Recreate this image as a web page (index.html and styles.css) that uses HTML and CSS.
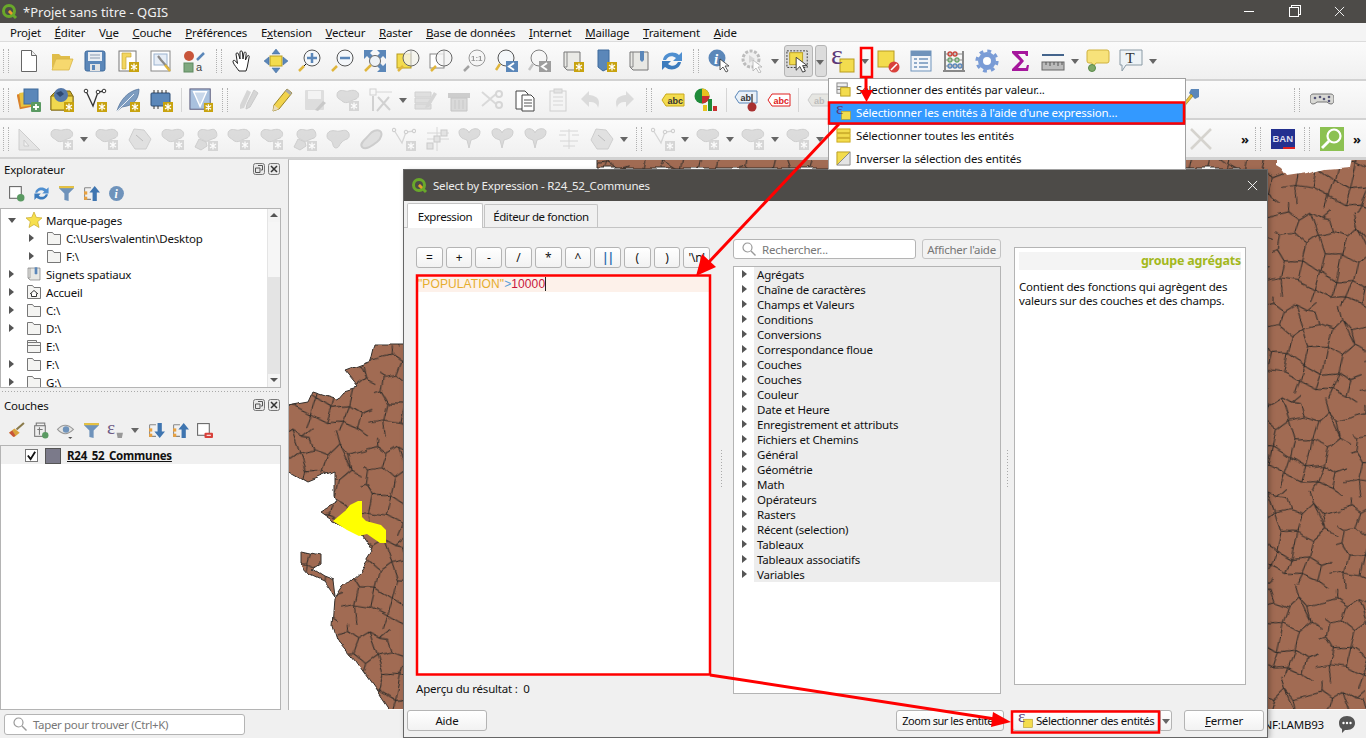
FILE: index.html
```html
<!DOCTYPE html>
<html lang="fr">
<head>
    <meta charset="UTF-8">
    <title>*Projet sans titre - QGIS</title>
    <link rel="stylesheet" href="styles.css">
</head>
<body>
    <!-- Icon sprite -->
    <svg class="sprite" xmlns="http://www.w3.org/2000/svg">
        <defs>
            <pattern id="cells" width="150" height="130" patternUnits="userSpaceOnUse" patternTransform="scale(.72) rotate(9)">
                <rect x="-5" y="-5" width="160" height="140" fill="#a16b53"/>
                <path d="M0 18L14 12 30 20 44 8 60 14 72 0M30 20L26 40 8 46 0 42M26 40L46 52 60 38 44 8M60 38L80 30 72 14 60 14M80 30L100 34 112 18 104 0M100 34L96 58 72 62 60 38M46 52L44 76 20 80 8 66 8 46M72 62L70 88 44 76M96 58L120 66 134 50 112 18M134 50L150 56M120 66L118 92 94 98 70 88M94 98L96 58M8 66L0 70M20 80L18 104 0 110M44 76L42 104 18 104M70 88L66 112 42 104M94 98L90 120 66 112M118 92L136 100 150 92M136 100L134 122 112 116 90 120M112 116L118 92M18 104L24 130M66 112L62 130M112 116L108 130M134 122L150 130M134 50L126 30 150 20M112 18L126 30M14 12L12 0M24 130L18 104M104 0L112 18" fill="none" stroke="#35302c" stroke-width="1.500"/>
            </pattern>
            <filter id="wobble" filterUnits="userSpaceOnUse" x="288" y="160" width="1078" height="550" color-interpolation-filters="sRGB">
                <feTurbulence type="fractalNoise" baseFrequency=".06" numOctaves="1" seed="4"/>
                <feDisplacementMap in="SourceGraphic" scale="8" xChannelSelector="R" yChannelSelector="G"/>
            </filter>
        </defs>
        <symbol id="b-gold" viewBox="0 0 10 10"><rect width="10" height="10" fill="#c8a30f"/><path d="M5 1.500v7M2 3l6 4M8 3L2 7" stroke="#fff" stroke-width="1.300"/></symbol>
        <symbol id="b-plus" viewBox="0 0 10 10"><rect width="10" height="10" rx="1" fill="#5a9a62"/><path d="M5 2v6M2 5h6" stroke="#fff" stroke-width="1.800"/></symbol>
        <symbol id="b-grey" viewBox="0 0 10 10"><rect width="10" height="10" fill="#cfccc4"/><path d="M5 1.500v7M2 3l6 4M8 3L2 7" stroke="#fff" stroke-width="1.300"/></symbol>
        <symbol id="i-new" viewBox="0 0 24 24"><path d="M4.500 1.500h10l5 5v16h-15z" fill="#fff" stroke="#666"/><path d="M14.500 1.500v5h5" fill="#eee" stroke="#666"/></symbol>
        <symbol id="i-open" viewBox="0 0 24 24"><path d="M2 5h7l2 2h9v4H6l-4 9z" fill="#e0bd4a"/><path d="M6 10h17l-4 11H2z" fill="#f6d86e" stroke="#d8b548" stroke-width=".8"/></symbol>
        <symbol id="i-save" viewBox="0 0 24 24"><rect x="2" y="2" width="20" height="20" rx="2" fill="#5b87b9" stroke="#3f6b9c"/><rect x="5" y="3" width="14" height="9" fill="#e9eef4"/><path d="M7 6h10M7 9h10" stroke="#8a9bb0"/><rect x="7" y="15" width="10" height="7" fill="#e4e4e4"/><rect x="9" y="16" width="3" height="5" fill="#5b87b9"/></symbol>
        <symbol id="i-layout" viewBox="0 0 24 24"><rect x="3" y="2" width="17" height="20" fill="#fff" stroke="#777"/><path d="M6 4h9v4h-5v12H6z" fill="#f3d65f" stroke="#c6a63a" stroke-width=".7"/><use href="#b-gold" x="13" y="13" width="10" height="10"/></symbol>
        <symbol id="i-wrench" viewBox="0 0 24 24"><rect x="2" y="2" width="19" height="20" fill="#fff" stroke="#888"/><rect x="5" y="5" width="13" height="11" fill="#e6edf6" stroke="#9cb3d0"/><path d="M9 7l3 4 8 9" stroke="#8a8a8a" stroke-width="2.200" fill="none"/><path d="M16 16l5 6" stroke="#e0b63c" stroke-width="2.500"/></symbol>
        <symbol id="i-style" viewBox="0 0 24 24"><circle cx="7" cy="7" r="5" fill="#c8553a"/><path d="M15 11l7-7" stroke="#5b87b9" stroke-width="2.500"/><rect x="2" y="14" width="9" height="9" fill="#7fa87f" stroke="#5f8a60"/></symbol>
        <symbol id="i-hand" viewBox="0 0 24 24"><path d="M8 22c-2-3-5-6-6-9-.5-2 1.500-2 2.500-1l2 2.500L5 5c0-1.500 2-1.500 2.500 0L9 10l0-7c0-1.500 2.200-1.500 2.400 0l.6 7 1-6c.3-1.400 2.300-1 2.200.5L14.500 11l1.800-4c.7-1.200 2.200-.5 1.900.8L17 14c-.3 3-1 5-2 8z" fill="#fff" stroke="#222"/></symbol>
        <symbol id="i-pansel" viewBox="0 0 24 24"><rect x="6" y="7" width="12" height="10" fill="#f3dc4e" stroke="#b89c1f"/><path d="M12 0l4 5H8zM12 24l-4-5h8zM0 12l5-4v8zM24 12l-5 4V8z" fill="#5b87b9" stroke="#3f6b9c" stroke-width=".5"/></symbol>
        <symbol id="i-zin" viewBox="0 0 24 24"><circle cx="15" cy="9" r="8" fill="#f4f7fa" stroke="#555"/><path d="M10 9h10M15 4v10" stroke="#5b87b9" stroke-width="2.500"/><path d="M9 15l-7 7" stroke="#111" stroke-width="1"/><path d="M7 17l-5 5" stroke="#e0b63c" stroke-width="2.500"/></symbol>
        <symbol id="i-zout" viewBox="0 0 24 24"><circle cx="15" cy="9" r="8" fill="#f4f7fa" stroke="#555"/><path d="M10 9h10" stroke="#5b87b9" stroke-width="2.500"/><path d="M7 17l-5 5" stroke="#e0b63c" stroke-width="2.500"/></symbol>
        <symbol id="i-zfull" viewBox="0 0 24 24"><path d="M1 1h9L7 4l3 3-3 3-3-3-3 3zM23 1v9l-3-3-3 3-3-3 3-3-3-3zM23 23h-9l3-3-3-3 3-3 3 3 3-3z" fill="#5b87b9"/><circle cx="12" cy="12" r="5.500" fill="#eef2f6" stroke="#666"/><path d="M8 16l-6 6" stroke="#e0b63c" stroke-width="2.500"/></symbol>
        <symbol id="i-zlayer" viewBox="0 0 24 24"><rect x="1" y="5" width="14" height="14" fill="#f3dc4e" stroke="#b89c1f"/><circle cx="15" cy="9" r="8" fill="#f4f4ec" fill-opacity=".8" stroke="#666"/><path d="M15 2v14" stroke="#bbb"/><path d="M7 17l-5 5" stroke="#e0b63c" stroke-width="2.500"/></symbol>
        <symbol id="i-zsel" viewBox="0 0 24 24"><rect x="1" y="5" width="14" height="14" fill="#fff" stroke="#888"/><circle cx="15" cy="9" r="8" fill="#f4f4f4" fill-opacity=".8" stroke="#666"/><path d="M15 2v14" stroke="#bbb"/><path d="M7 17l-5 5" stroke="#e0b63c" stroke-width="2.500"/></symbol>
        <symbol id="i-z11" viewBox="0 0 24 24"><circle cx="15" cy="9" r="8" fill="#f6f6f6" stroke="#777"/><path d="M7 17l-5 5" stroke="#888" stroke-width="2.500"/></symbol>
        <symbol id="i-zlast" viewBox="0 0 24 24"><circle cx="11" cy="9" r="8" fill="#f4f7fa" stroke="#555"/><path d="M5 15l-4 6" stroke="#e0b63c" stroke-width="2.500"/><rect x="11" y="12" width="12" height="11" fill="#5b87b9"/><path d="M19 14l-5 3.500 5 3.500" stroke="#fff" stroke-width="2" fill="none"/></symbol>
        <symbol id="i-map" viewBox="0 0 24 24"><path d="M3 3h16v18H6l-3-3z" fill="#eaeae6" stroke="#777"/><path d="M6 3v15H3" fill="none" stroke="#888"/><use href="#b-gold" x="13" y="13" width="10" height="10"/></symbol>
        <symbol id="i-flag" viewBox="0 0 24 24"><path d="M4 1h11v18l-6 3-5-4z" fill="#5b87b9" stroke="#3f6b9c"/><use href="#b-gold" x="13" y="13" width="10" height="10"/></symbol>
        <symbol id="i-book" viewBox="0 0 24 24"><path d="M3 3h18v18H6l-3-3z" fill="#e8e8e4" stroke="#777"/><path d="M6 3v15H3" fill="none" stroke="#888"/><path d="M13 2h4v9l-2 2-2-2z" fill="#5b87b9"/></symbol>
        <symbol id="i-refresh" viewBox="0 0 24 24"><path d="M3 11C4 4 13 1 19 6l3-3v9h-9l3-3c-4-3-8-2-10 2z" fill="#4f8fd0"/><path d="M21 13c-1 7-10 10-16 5l-3 3v-9h9l-3 3c4 3 8 2 10-2z" fill="#3b7bbd"/></symbol>
        <symbol id="i-ident" viewBox="0 0 24 24"><circle cx="9" cy="9" r="8.500" fill="#5b87b9"/><path d="M12 10l0 11 3-3 3 5 2-1-3-5h4z" fill="#fff" stroke="#333" stroke-width=".8"/></symbol>
        <symbol id="i-action" viewBox="0 0 24 24"><circle cx="10" cy="10" r="8" fill="#eee" stroke="#aaa" stroke-width="3" stroke-dasharray="3 1.500"/><path d="M8 6l6 4-6 4z" fill="#ccc"/><path d="M12 11v11l3-3 3 5 2-1-3-5h4z" fill="#fff" stroke="#999" stroke-width=".8"/></symbol>
        <symbol id="i-select" viewBox="0 0 26 26"><rect x="1" y="2" width="22" height="18" fill="none" stroke="#333" stroke-dasharray="2 1.500"/><rect x="4" y="4" width="14" height="13" fill="#f3dc4e" stroke="#b89c1f"/><path d="M11 9v14l4-4 3 6 3-1-3-6h5z" fill="#fff" stroke="#333"/></symbol>
        <symbol id="i-eps" viewBox="0 0 24 24"><rect x="9" y="10" width="14" height="13" fill="#f3dc4e" stroke="#b89c1f"/></symbol>
        <symbol id="i-desel" viewBox="0 0 24 24"><rect x="2" y="2" width="16" height="16" fill="#f3dc4e" stroke="#b89c1f"/><circle cx="18" cy="18" r="5.500" fill="#d9413b"/><path d="M15 21l6-6" stroke="#fff" stroke-width="1.600"/></symbol>
        <symbol id="i-table" viewBox="0 0 24 24"><rect x="2" y="2" width="20" height="20" fill="#f2f5f9" stroke="#6f93bb"/><rect x="2" y="2" width="20" height="5" fill="#6f93bb"/><path d="M5 10h3M10 10h9M5 14h3M10 14h9M5 18h3M10 18h9" stroke="#6f93bb" stroke-width="1.500"/></symbol>
        <symbol id="i-abacus" viewBox="0 0 24 24"><path d="M3 2v19M21 2v19M1 22h22" stroke="#666" stroke-width="1.500"/><path d="M3 5h18M3 11h18M3 17h18" stroke="#888"/><g fill="none" stroke-width="1.300"><circle cx="8" cy="5" r="2" stroke="#c8453a"/><circle cx="13" cy="5" r="2" stroke="#c8453a"/><circle cx="8" cy="11" r="2" stroke="#6aa36a"/><circle cx="15" cy="11" r="2" stroke="#6aa36a"/><circle cx="8" cy="17" r="2" stroke="#5b87b9"/><circle cx="13" cy="17" r="2" stroke="#5b87b9"/><circle cx="18" cy="17" r="2" stroke="#5b87b9"/></g></symbol>
        <symbol id="i-gear" viewBox="0 0 24 24"><circle cx="12" cy="12" r="6.500" fill="none" stroke="#7a9cd6" stroke-width="5"/><circle cx="12" cy="12" r="10" fill="none" stroke="#7a9cd6" stroke-width="3.200" stroke-dasharray="3.850 4"/><circle cx="12" cy="12" r="3.500" fill="#fff"/></symbol>
        <symbol id="i-sigma" viewBox="0 0 24 24"><path d="M4 2h16v5h-2l-1-2H10l6 7-6 7h8l1-3h2l-1 6H4v-2l8-8-8-8z" fill="#a5179c"/></symbol>
        <symbol id="i-ruler" viewBox="0 0 24 24"><path d="M1 6h22" stroke="#44648c" stroke-width="2"/><rect x="1" y="13" width="22" height="8" fill="#bbb" stroke="#666"/><path d="M5 13v3M9 13v4M13 13v3M17 13v4M21 13v3" stroke="#555"/></symbol>
        <symbol id="i-balloon" viewBox="0 0 24 24"><path d="M3 1h18q2 0 2 2v9q0 2-2 2H10l-3 4-1-4H3q-2 0-2-2V3q0-2 2-2z" fill="#f7e27a" stroke="#cfb23e"/><circle cx="6" cy="19" r="3.500" fill="#7fa86a" stroke="#5a8a4a"/></symbol>
        <symbol id="i-textbox" viewBox="0 0 24 24"><path d="M1 1h22v15H7l-4 6v-6H1z" fill="#eef3f6" stroke="#8a9aa5"/></symbol>
        <symbol id="i-dsm" viewBox="0 0 24 24"><rect x="1" y="5" width="15" height="15" fill="#d9822b" transform="rotate(-12 8 12)"/><rect x="3" y="4" width="14" height="14" fill="#e9c33f" transform="rotate(-8 10 11)"/><rect x="7" y="1" width="14" height="15" fill="#5b87b9" stroke="#3f6b9c"/><use href="#b-plus" x="14" y="14" width="10" height="10"/></symbol>
        <symbol id="i-gpkg" viewBox="0 0 24 24"><path d="M1 8l5-5h14l3 5v14H1z" fill="#c9a826" stroke="#7a6510"/><path d="M1 8h22v14H1z" fill="#f0d84e" stroke="#8a7315"/><circle cx="11" cy="7" r="7" fill="#5578a8"/><path d="M6 5l5-2 3 3-4 3z" fill="#2e4870"/><use href="#b-gold" x="14" y="14" width="10" height="10"/></symbol>
        <symbol id="i-vee" viewBox="0 0 24 24"><path d="M3 3l7 15 5-14 6-1" fill="none" stroke="#333" stroke-width="1.300"/><g fill="#fff" stroke="#333"><circle cx="3" cy="3" r="1.800"/><circle cx="15" cy="4" r="1.800"/><circle cx="21" cy="3" r="1.800"/></g><use href="#b-gold" x="14" y="14" width="10" height="10"/></symbol>
        <symbol id="i-feather" viewBox="0 0 24 24"><path d="M1 23C4 12 12 3 23 1c0 7-3 15-12 17l-5 1z" fill="#7d9cc0" stroke="#4f6f97" stroke-width=".7"/><path d="M1 23L18 6" stroke="#e8eef5"/><use href="#b-gold" x="14" y="14" width="10" height="10"/></symbol>
        <symbol id="i-chip" viewBox="0 0 24 24"><rect x="2" y="5" width="19" height="13" rx="1" fill="#5b87b9" stroke="#2d4d75"/><path d="M5 2v3M9 2v3M13 2v3M17 2v3M5 18v3M9 18v3" stroke="#333"/><use href="#b-gold" x="14" y="14" width="10" height="10"/></symbol>
        <symbol id="i-mesh" viewBox="0 0 26 26"><rect x="1" y="1" width="22" height="22" fill="#a9c1de" stroke="#557"/><path d="M5 4l7 16 7-16z" fill="#c9d8ea" stroke="#fff" stroke-width="1.500"/><use href="#b-gold" x="16" y="16" width="10" height="10"/></symbol>
        <symbol id="i-pencil" viewBox="0 0 24 24"><path d="M17 1l5 4L9 21l-6 2 1-6z" fill="#f1d34c" stroke="#9a8325"/><path d="M4 17l5 4-6 2z" fill="#eadbb8"/><path d="M17 1l5 4-2 2-5-4z" fill="#aaa"/></symbol>
        <symbol id="i-pin" viewBox="0 0 24 24"><path d="M14 1h8v8l-4 2-6-6z" fill="#5b87b9"/><path d="M16 8L6 20l-3 3 1-4L14 6z" fill="#e9c33f" stroke="#8a7315" stroke-width=".6"/></symbol>
        <symbol id="i-pencils" viewBox="0 0 24 24"><path d="M10 2l4 2-7 16-4 1 0-4z" fill="#ccc"/><path d="M17 2l4 3-8 14-4 2 1-5z" fill="#ccc" stroke="#bbb"/></symbol>
        <symbol id="i-saveed" viewBox="0 0 24 24"><rect x="2" y="2" width="19" height="20" rx="1" fill="#d6d6d2"/><rect x="5" y="3" width="13" height="8" fill="#f2f2f0"/><path d="M12 22l8-9 3 2-8 8z" fill="#bbb"/></symbol>
        <symbol id="i-blob" viewBox="0 0 24 24"><path d="M1 7c0-5 5-5 8-4s7-2 11 0 3 7 0 8-5 2-7 3-5 1-7-1-5-2-5-6z" fill="#d5d3ce" stroke="#c2c0ba"/><use href="#b-grey" x="13" y="13" width="10" height="10"/></symbol>
        <symbol id="i-blobbare" viewBox="0 0 24 24"><path d="M1 9c0-5 5-6 9-5s8-2 11 0 3 7 0 8-4 2-6 4-2 5-5 5-3-4-4-6-5-2-5-6z" fill="#d5d3ce" stroke="#c2c0ba"/></symbol>
        <symbol id="i-blobs" viewBox="0 0 24 24"><path d="M4 7c0-5 5-5 8-4s7-2 9 0 3 7 0 8-5 2-7 3-3 0-5-1-5-2-5-6z" fill="#d5d3ce" stroke="#c2c0ba"/><path d="M1 20l4-8 7 3 1 4-6 4z" fill="#d5d3ce" stroke="#c2c0ba"/><use href="#b-grey" x="14" y="14" width="10" height="10"/></symbol>
        <symbol id="i-hex" viewBox="0 0 24 24"><path d="M6 2l10 1 7 9-5 10H7L1 13z" fill="#dcdad5" stroke="#c2c0ba"/><path d="M8 8l7 6" stroke="#aaa"/></symbol>
        <symbol id="i-tri" viewBox="0 0 24 24"><path d="M2 2l21 21H2z" fill="#e2e0db" stroke="#c2c0ba"/><path d="M7 13l5 6H7z" fill="#f2f2f0" stroke="#c2c0ba"/></symbol>
        <symbol id="i-oval" viewBox="0 0 24 24"><path d="M3 20c-3-4 4-8 7-12s8-6 11-4 1 8-3 11-11 9-15 5z" fill="#dad8d3" stroke="#c2c0ba" stroke-width="2"/></symbol>
        <symbol id="i-node" viewBox="0 0 24 24"><path d="M2 3l8 13 4-11 8-1" fill="none" stroke="#ccc" stroke-width="1.300"/><g fill="#f2f2f0" stroke="#bbb"><circle cx="2" cy="3" r="1.800"/><circle cx="14" cy="5" r="1.800"/><circle cx="22" cy="4" r="1.800"/></g><use href="#b-grey" x="14" y="14" width="10" height="10"/></symbol>
        <symbol id="i-grid" viewBox="0 0 24 24"><path d="M12 0v24M2 12h22M2 6h22" stroke="#ccc"/><g fill="#ddd" stroke="#bbb"><rect x="9" y="9" width="6" height="6"/><rect x="16" y="3" width="6" height="6"/><rect x="2" y="16" width="6" height="6"/></g></symbol>
        <symbol id="i-scis" viewBox="0 0 24 24"><path d="M1 5c0-5 9-4 10 1 1-5 11-6 11-1 0 6-6 7-9 8l-2 8-2-8c-3-1-8-2-8-8z" fill="#d5d3ce" stroke="#c2c0ba"/></symbol>
        <symbol id="i-merge" viewBox="0 0 24 24"><path d="M3 4h18M2 8h7M15 8h7M12 2v20M3 14h18M6 19h12" stroke="#ccc"/></symbol>
        <symbol id="i-scissors" viewBox="0 0 24 24"><path d="M2 4l14 12M2 18L16 6" stroke="#d0d0cc" stroke-width="2"/><circle cx="19" cy="6" r="3" fill="none" stroke="#ccc" stroke-width="2"/><circle cx="19" cy="17" r="3" fill="none" stroke="#ccc" stroke-width="2"/></symbol>
        <symbol id="i-copy" viewBox="0 0 24 24"><path d="M3 3h9l3 3v15H3z" fill="#fff" stroke="#444"/><path d="M9 7h9l3 3v13H9z" fill="#fff" stroke="#444"/><path d="M11 12h8M11 15h8M11 18h8" stroke="#555"/></symbol>
        <symbol id="i-paste" viewBox="0 0 24 24"><rect x="4" y="3" width="16" height="20" fill="#f4f4f2" stroke="#c4c4c0"/><rect x="8" y="1" width="8" height="4" fill="#ddd" stroke="#c4c4c0"/><path d="M7 9h10M7 13h10M7 17h10" stroke="#ccc"/></symbol>
        <symbol id="i-undo" viewBox="0 0 24 24"><path d="M10 3L2 11l8 8v-5c5 0 8 1 9 6 3-9-1-12-9-13z" fill="#d5d3ce"/></symbol>
        <symbol id="i-redo" viewBox="0 0 24 24"><path d="M14 3l8 8-8 8v-5c-5 0-8 1-9 6-3-9 1-12 9-13z" fill="#d5d3ce"/></symbol>
        <symbol id="i-trash" viewBox="0 0 24 24"><path d="M1 5h22v5H1z" fill="#c9bdb8"/><path d="M4 10h16v13H4z" fill="#d8cfcc" stroke="#c2b4ae"/><path d="M8 12v9M12 12v9M16 12v9" stroke="#bbb"/></symbol>
        <symbol id="i-attr" viewBox="0 0 24 24"><path d="M1 4h16v5H1zM1 10h16v5H1zM1 16h16v5H1z" fill="#d8d8d4" stroke="#c4c4c0"/><path d="M12 17l8-13 3 2-8 13-4 1z" fill="#ccc"/></symbol>
        <symbol id="i-fx" viewBox="0 0 24 24"><rect x="1" y="1" width="6" height="6" fill="none" stroke="#c4c4c0"/><path d="M7 4h16" stroke="#ccc"/><path d="M8 23L20 9M9 9l12 13M4 8v15" stroke="#c6c6c2" stroke-width="2"/></symbol>
        <symbol id="i-labelbag" viewBox="0 0 24 14"><path d="M5 1h18v12H5l-4-6z" fill="#f3dc4e" stroke="#c9a81a"/></symbol>
        <symbol id="i-labelred" viewBox="0 0 24 14"><path d="M5 1h18v12H5l-4-6z" fill="#fff" stroke="#e02020"/></symbol>
        <symbol id="i-labelblue" viewBox="0 0 24 24"><path d="M5 3h18v12H5l-4-6z" fill="#e8f0f8" stroke="#5b87b9"/></symbol>
        <symbol id="i-labelgrey" viewBox="0 0 24 14"><path d="M5 1h18v12H5l-4-6z" fill="#e6e6e2" stroke="#ccc"/></symbol>
        <symbol id="i-diagram" viewBox="0 0 24 24"><circle cx="8" cy="8" r="7.500" fill="#1f8a3a"/><path d="M8 8V.500A7.500 7.500 0 0 1 15.500 8z" fill="#e8c21e"/><path d="M8 8h7.500A7.500 7.500 0 0 1 8 15.500z" fill="#c83030"/><rect x="9" y="17" width="4" height="6" fill="#e8c21e"/><rect x="14" y="11" width="4" height="12" fill="#1f8a3a"/><rect x="19" y="18" width="4" height="5" fill="#c83030"/></symbol>
        <symbol id="i-pad" viewBox="0 0 24 24"><path d="M3 6h18q3 0 3 5t-3 5q-2 0-4-2H7q-2 2-4 2-3 0-3-5t3-5z" fill="#d8d8d4" stroke="#777"/><g fill="#557"><circle cx="5" cy="10" r="1.300"/><circle cx="10" cy="9" r="1.300"/><circle cx="14" cy="11" r="1.300"/><circle cx="19" cy="9" r="1.300"/><circle cx="19" cy="13" r="1.300"/></g></symbol>
        <symbol id="i-close-x" viewBox="0 0 24 24"><path d="M2 2l20 20M22 2L2 22" stroke="#d5d3ce" stroke-width="2.500"/></symbol>
        <symbol id="i-ban" viewBox="0 0 24 24"><rect y="2" width="24" height="18" fill="#23308f"/><rect y="20" width="12" height="2" fill="#23308f"/><rect x="12" y="20" width="12" height="2" fill="#d22"/></symbol>
        <symbol id="i-lens" viewBox="0 0 24 24"><rect width="24" height="24" fill="#8cc152"/><circle cx="14" cy="9" r="6.500" fill="none" stroke="#fff" stroke-width="2.200"/><path d="M9 14l-7 7" stroke="#fff" stroke-width="2.800"/></symbol>
        <symbol id="i-search" viewBox="0 0 14 14"><circle cx="5.500" cy="5.500" r="4.500" fill="none" stroke="#999" stroke-width="1.200"/><path d="M9 9l4.500 4.500" stroke="#999" stroke-width="1.400"/></symbol>
        <symbol id="i-folder" viewBox="0 0 16 16"><path d="M1.500 2.500h5l1.500 2h6.500v10h-13z" fill="#f4f4f2" stroke="#777"/></symbol>
        <symbol id="i-drive" viewBox="0 0 16 16"><path d="M1.500 2.500h9v2h4v10h-13z" fill="#f4f4f2" stroke="#777"/><path d="M1.500 4.500h9M1.500 7.500h13" stroke="#777"/></symbol>
        <symbol id="i-home" viewBox="0 0 16 16"><path d="M1.500 1.500h5l1.500 2h6.500v11h-13z" fill="#f4f4f2" stroke="#777"/><path d="M4 10l4-3.500 4 3.500M5.500 9.500v3h5v-3" fill="#fff" stroke="#333"/></symbol>
        <symbol id="i-star" viewBox="0 0 16 16"><path d="M8 0l2.300 5.400 5.700.5-4.300 3.800 1.300 5.800L8 12.500 3 15.500l1.300-5.800L0 5.900l5.700-.5z" fill="#f7e04e" stroke="#c7a92a" stroke-width=".7"/></symbol>
        <symbol id="i-funnel" viewBox="0 0 16 16"><path d="M1 1h14v2L10 8v7l-4-1V8L1 3z" fill="#6f93bb"/><path d="M1 1h14v2H1z" fill="#e9c33f"/></symbol>
        <symbol id="i-info" viewBox="0 0 16 16"><circle cx="8" cy="8" r="7" fill="#6f93bb"/></symbol>
        <symbol id="i-addgrp" viewBox="0 0 16 16"><rect x="1.500" y="1.500" width="11" height="11" fill="#fff" stroke="#666"/><circle cx="12" cy="12" r="3.500" fill="#5a9a62"/></symbol>
        <symbol id="i-collapse" viewBox="0 0 16 16"><path d="M1.500 2.500h6M1.500 2.500v11h6" fill="none" stroke="#888"/><rect x="1" y="6" width="3" height="3" fill="#e9a13f"/><rect x="1" y="11" width="3" height="3" fill="#e9a13f"/><path d="M11 1l5 6h-3v8H9V7H6z" fill="#3f75b0"/></symbol>
        <symbol id="i-expand" viewBox="0 0 16 16"><path d="M1.500 2.500h6M1.500 2.500v11h6" fill="none" stroke="#888"/><rect x="1" y="6" width="3" height="3" fill="#e9a13f"/><rect x="1" y="11" width="3" height="3" fill="#e9a13f"/><path d="M11 15l5-6h-3V1H9v8H6z" fill="#3f75b0"/></symbol>
        <symbol id="i-brush" viewBox="0 0 16 16"><path d="M1 10l5-4 5 4-5 4z" fill="#d9a23c"/><path d="M1 10l3-2 3 5-2 1z" fill="#c8553a"/><path d="M8 7l7-6" stroke="#8a7a4a" stroke-width="2"/></symbol>
        <symbol id="i-addlayer" viewBox="0 0 16 16"><rect x="4" y="1" width="8" height="3" fill="none" stroke="#777"/><rect x="2.500" y="3.500" width="10" height="10" fill="#eee" stroke="#777"/><path d="M7 5v7M5 7h5" stroke="#777"/><circle cx="12.500" cy="12.500" r="3" fill="#5a9a62"/></symbol>
        <symbol id="i-eye" viewBox="0 0 18 16"><path d="M1 7q7-8 15 0-8 8-15 0z" fill="#e4e4e2" stroke="#999"/><circle cx="9" cy="7" r="3" fill="#6f93bb"/><path d="M11 14l4 0-2 2z" fill="#555"/></symbol>
        <symbol id="i-eps16" viewBox="0 0 16 16"><path d="M9 10h6l-1 5h-4z" fill="#999"/></symbol>
        <symbol id="i-rmlayer" viewBox="0 0 16 16"><rect x="1.500" y="1.500" width="11" height="11" fill="#fff" stroke="#666"/><rect x="8" y="10" width="8" height="5" rx="1" fill="#d8413b"/><path d="M10 12.500h4" stroke="#fff"/></symbol>
        <symbol id="i-float" viewBox="0 0 12 12"><rect x=".5" y=".5" width="11" height="11" rx="2" fill="#e8e8e8" stroke="#777"/><path d="M5 2.500h4.500V7H8M2.500 5H7v4.500H2.500z" fill="none" stroke="#555"/></symbol>
        <symbol id="i-dockx" viewBox="0 0 12 12"><rect x=".5" y=".5" width="11" height="11" rx="2" fill="#e8e8e8" stroke="#777"/><path d="M3 3l6 6M9 3L3 9" stroke="#333" stroke-width="1.500"/></symbol>
        <symbol id="i-logo" viewBox="0 0 16 16"><circle cx="7" cy="7" r="5.500" fill="none" stroke="#69a82a" stroke-width="3"/><path d="M7 7l7 7" stroke="#69a82a" stroke-width="3"/><path d="M7 7l3 3" stroke="#ef9a2d" stroke-width="2.500"/></symbol>
        <symbol id="i-chat" viewBox="0 0 18 18"><path d="M9 1c5 0 8 3 8 7s-3 7-8 7l-2 0-3 3v-4C2 13 1 11 1 8c0-4 3-7 8-7z" fill="#555"/><circle cx="5.500" cy="8" r="1.200" fill="#fff"/><circle cx="9" cy="8" r="1.200" fill="#fff"/><circle cx="12.500" cy="8" r="1.200" fill="#fff"/></symbol>
        <symbol id="i-selval" viewBox="0 0 16 16"><rect x="1" y="1" width="11" height="11" fill="#eee" stroke="#888"/><path d="M1 5h11M1 8h11" stroke="#888"/><rect x="5" y="6" width="10" height="9" fill="#f3dc4e" stroke="#b89c1f"/></symbol>
        <symbol id="i-selall" viewBox="0 0 16 16"><rect x="1" y="1" width="14" height="4" fill="#f3dc4e" stroke="#c9a81a"/><rect x="1" y="6" width="14" height="4" fill="#f3dc4e" stroke="#c9a81a"/><rect x="1" y="11" width="14" height="4" fill="#f3dc4e" stroke="#c9a81a"/></symbol>
        <symbol id="i-selinv" viewBox="0 0 16 16"><path d="M1 1h14L1 15z" fill="#f3dc4e" stroke="#b89c1f"/><path d="M15 1v14H1z" fill="#e4e4e4" stroke="#888"/></symbol>
    </svg>

    <div class="app">
        <header class="titlebar">
            <svg class="logo"><use href="#i-logo"/></svg>
            <span>*Projet sans titre - QGIS</span>
            <div class="winbtns">
                <span class="win-min"></span>
                <span class="win-max"></span>
                <svg class="win-close" viewBox="0 0 12 12"><path d="M1 1l10 10M11 1L1 11" stroke="#fff"/></svg>
            </div>
        </header>

        <nav class="menubar">
            <span>Pro<u>j</u>et</span>
            <span><u>É</u>diter</span>
            <span>V<u>u</u>e</span>
            <span><u>C</u>ouche</span>
            <span><u>P</u>références</span>
            <span>E<u>x</u>tension</span>
            <span><u>V</u>ecteur</span>
            <span><u>R</u>aster</span>
            <span><u>B</u>ase de données</span>
            <span><u>I</u>nternet</span>
            <span><u>M</u>aillage</span>
            <span><u>T</u>raitement</span>
            <span><u>A</u>ide</span>
        </nav>

        <!-- Toolbar 1 -->
        <div class="toolbar">
            <i class="grip first"></i>
            <b class="tb"><svg><use href="#i-new"/></svg></b>
            <b class="tb"><svg><use href="#i-open"/></svg></b>
            <b class="tb"><svg><use href="#i-save"/></svg></b>
            <b class="tb"><svg><use href="#i-layout"/></svg></b>
            <b class="tb"><svg><use href="#i-wrench"/></svg></b>
            <b class="tb"><svg viewBox="0 0 24 24"><use href="#i-style"/><text class="t-a" x="14" y="22">a</text></svg></b>
            <i class="grip"></i>
            <b class="tb"><svg><use href="#i-hand"/></svg></b>
            <b class="tb"><svg><use href="#i-pansel"/></svg></b>
            <b class="tb"><svg><use href="#i-zin"/></svg></b>
            <b class="tb"><svg><use href="#i-zout"/></svg></b>
            <b class="tb"><svg><use href="#i-zfull"/></svg></b>
            <b class="tb"><svg><use href="#i-zlayer"/></svg></b>
            <b class="tb"><svg><use href="#i-zsel"/></svg></b>
            <b class="tb off"><svg viewBox="0 0 24 24"><use href="#i-z11"/><text class="t-11" x="9" y="12">1:1</text></svg></b>
            <b class="tb"><svg><use href="#i-zlast"/></svg></b>
            <b class="tb off"><svg><use href="#i-zlast"/></svg></b>
            <b class="tb"><svg><use href="#i-map"/></svg></b>
            <b class="tb"><svg><use href="#i-flag"/></svg></b>
            <b class="tb"><svg><use href="#i-book"/></svg></b>
            <b class="tb"><svg><use href="#i-refresh"/></svg></b>
            <i class="grip n"></i>
            <b class="tb"><svg viewBox="0 0 24 24"><use href="#i-ident"/><text class="t-i" x="6" y="15">i</text></svg></b>
            <b class="tb off"><svg><use href="#i-action"/></svg></b>
            <i class="drop"></i>
            <b class="tb pressed"><svg><use href="#i-select"/></svg></b>
            <i class="drop pressed-drop"></i>
            <b class="tb"><svg class="eps-icon" viewBox="0 0 24 24"><use href="#i-eps"/><text class="t-eps" x="0" y="15">ε</text></svg></b>
            <i class="drop"></i>
            <b class="tb"><svg><use href="#i-desel"/></svg></b>
            <b class="tb"><svg><use href="#i-table"/></svg></b>
            <b class="tb"><svg><use href="#i-abacus"/></svg></b>
            <b class="tb"><svg><use href="#i-gear"/></svg></b>
            <b class="tb"><svg><use href="#i-sigma"/></svg></b>
            <b class="tb"><svg><use href="#i-ruler"/></svg></b>
            <i class="drop"></i>
            <b class="tb"><svg><use href="#i-balloon"/></svg></b>
            <b class="tb"><svg viewBox="0 0 24 24"><use href="#i-textbox"/><text class="t-t" x="6.500" y="14">T</text></svg></b>
            <i class="drop"></i>
        </div>

        <!-- Toolbar 2 -->
        <div class="toolbar">
            <i class="grip first"></i>
            <b class="tb"><svg><use href="#i-dsm"/></svg></b>
            <b class="tb"><svg><use href="#i-gpkg"/></svg></b>
            <b class="tb"><svg><use href="#i-vee"/></svg></b>
            <b class="tb"><svg><use href="#i-feather"/></svg></b>
            <b class="tb"><svg><use href="#i-chip"/></svg></b>
            <i class="sep wide"></i>
            <b class="tb"><svg><use href="#i-mesh"/></svg></b>
            <i class="grip n"></i>
            <b class="tb off"><svg><use href="#i-pencils"/></svg></b>
            <b class="tb"><svg><use href="#i-pencil"/></svg></b>
            <b class="tb off"><svg><use href="#i-saveed"/></svg></b>
            <b class="tb off"><svg><use href="#i-blob"/></svg></b>
            <b class="tb off"><svg><use href="#i-fx"/></svg></b>
            <i class="drop"></i>
            <b class="tb off"><svg><use href="#i-attr"/></svg></b>
            <b class="tb off"><svg><use href="#i-trash"/></svg></b>
            <b class="tb off"><svg><use href="#i-scissors"/></svg></b>
            <b class="tb"><svg><use href="#i-copy"/></svg></b>
            <b class="tb off"><svg><use href="#i-paste"/></svg></b>
            <b class="tb off"><svg><use href="#i-undo"/></svg></b>
            <b class="tb off"><svg><use href="#i-redo"/></svg></b>
            <i class="grip"></i>
            <b class="tb lab"><svg viewBox="0 0 24 14"><use href="#i-labelbag"/><text class="t-lab" x="6.500" y="10.500">abc</text></svg></b>
            <b class="tb"><svg><use href="#i-diagram"/></svg></b>
            <i class="sep wide"></i>
            <b class="tb"><svg viewBox="0 0 24 24"><use href="#i-labelblue"/><text class="t-lab" x="6.500" y="12.500">ab</text><path d="M18 6v10" stroke="#777" stroke-width="2"/><circle cx="18" cy="19" r="4.500" fill="#a83030"/></svg></b>
            <b class="tb lab"><svg viewBox="0 0 24 14"><use href="#i-labelred"/><text class="t-lab red" x="6.500" y="10.500">abc</text></svg></b>
            <i class="sep"></i>
            <b class="tb lab"><svg viewBox="0 0 24 14"><use href="#i-labelgrey"/><text class="t-lab grey" x="7" y="10.500">ab</text></svg></b>
            <div class="right-group pad-right">
                <b class="tb"><svg><use href="#i-pin"/></svg></b>
                <i class="fill"></i>
                <i class="grip"></i>
                <b class="tb"><svg><use href="#i-pad"/></svg></b>
            </div>
        </div>

        <!-- Toolbar 3 -->
        <div class="toolbar">
            <i class="grip first"></i>
            <b class="tb off"><svg><use href="#i-tri"/></svg></b>
            <b class="tb off"><svg><use href="#i-blob"/></svg></b>
            <i class="drop"></i>
            <b class="tb off"><svg><use href="#i-blob"/></svg></b>
            <b class="tb off"><svg><use href="#i-hex"/></svg></b>
            <b class="tb off"><svg><use href="#i-blob"/></svg></b>
            <b class="tb off"><svg><use href="#i-blobs"/></svg></b>
            <b class="tb off"><svg><use href="#i-blob"/></svg></b>
            <b class="tb off"><svg><use href="#i-blob"/></svg></b>
            <b class="tb off"><svg><use href="#i-blobs"/></svg></b>
            <b class="tb off"><svg><use href="#i-blobbare"/></svg></b>
            <b class="tb off"><svg><use href="#i-oval"/></svg></b>
            <b class="tb off"><svg><use href="#i-node"/></svg></b>
            <b class="tb off"><svg><use href="#i-grid"/></svg></b>
            <b class="tb off"><svg><use href="#i-scis"/></svg></b>
            <b class="tb off"><svg><use href="#i-scis"/></svg></b>
            <b class="tb off"><svg><use href="#i-scis"/></svg></b>
            <b class="tb off"><svg><use href="#i-merge"/></svg></b>
            <b class="tb off"><svg><use href="#i-hex"/></svg></b>
            <i class="drop"></i>
            <i class="grip"></i>
            <b class="tb off"><svg><use href="#i-node"/></svg></b>
            <i class="drop"></i>
            <b class="tb off"><svg><use href="#i-blob"/></svg></b>
            <i class="drop"></i>
            <b class="tb off"><svg><use href="#i-blob"/></svg></b>
            <i class="drop"></i>
            <b class="tb off"><svg><use href="#i-blob"/></svg></b>
            <i class="drop"></i>
            <div class="right-group">
                <b class="tb"><svg><use href="#i-close-x"/></svg></b>
                <span class="more gap-more">»</span>
                <i class="grip"></i>
                <b class="tb"><svg viewBox="0 0 24 24"><use href="#i-ban"/><text class="t-ban" x="1.500" y="15">BAN</text></svg></b>
                <i class="grip"></i>
                <b class="tb"><svg><use href="#i-lens"/></svg></b>
                <span class="more">»</span>
            </div>
        </div>

        <div class="main">
            <aside class="side">
                <div class="dock explorer">
                    <div class="dock-title">
                        <span>Explorateur</span>
                        <svg class="dock-btn"><use href="#i-float"/></svg>
                        <svg class="dock-btn"><use href="#i-dockx"/></svg>
                    </div>
                    <div class="dock-tools">
                        <svg><use href="#i-addgrp"/></svg>
                        <svg><use href="#i-refresh"/></svg>
                        <svg><use href="#i-funnel"/></svg>
                        <svg><use href="#i-collapse"/></svg>
                        <svg viewBox="0 0 16 16"><use href="#i-info"/><text class="t-i small" x="6" y="12.500">i</text></svg>
                    </div>
                    <div class="tree">
                        <ul class="tree-rows">
                            <li><i class="arrow open"></i><svg><use href="#i-star"/></svg>Marque-pages</li>
                            <li class="sub"><i class="arrow"></i><svg><use href="#i-folder"/></svg>C:\Users\valentin\Desktop</li>
                            <li class="sub"><i class="arrow"></i><svg><use href="#i-folder"/></svg>F:\</li>
                            <li><i class="arrow"></i><svg><use href="#i-book"/></svg>Signets spatiaux</li>
                            <li><i class="arrow"></i><svg><use href="#i-home"/></svg>Accueil</li>
                            <li><i class="arrow"></i><svg><use href="#i-folder"/></svg>C:\</li>
                            <li><i class="arrow"></i><svg><use href="#i-folder"/></svg>D:\</li>
                            <li><i class="arrow none"></i><svg><use href="#i-drive"/></svg>E:\</li>
                            <li><i class="arrow"></i><svg><use href="#i-folder"/></svg>F:\</li>
                            <li><i class="arrow"></i><svg><use href="#i-folder"/></svg>G:\</li>
                        </ul>
                        <div class="scrollbar">
                            <span class="sb-up"></span>
                            <span class="sb-track"></span>
                            <span class="sb-thumb"></span>
                            <span class="sb-down"></span>
                        </div>
                    </div>
                </div>
                <div class="splitter"></div>
                <div class="dock layers">
                    <div class="dock-title">
                        <span>Couches</span>
                        <svg class="dock-btn"><use href="#i-float"/></svg>
                        <svg class="dock-btn"><use href="#i-dockx"/></svg>
                    </div>
                    <div class="dock-tools tight">
                        <svg><use href="#i-brush"/></svg>
                        <svg><use href="#i-addlayer"/></svg>
                        <svg class="wide"><use href="#i-eye"/></svg>
                        <svg><use href="#i-funnel"/></svg>
                        <svg class="eps-icon" viewBox="0 0 16 16"><use href="#i-eps16"/><text class="t-eps small" x="0" y="11">ε</text></svg>
                        <i class="drop small"></i>
                        <svg><use href="#i-expand"/></svg>
                        <svg><use href="#i-collapse"/></svg>
                        <svg><use href="#i-rmlayer"/></svg>
                    </div>
                    <div class="layer-tree">
                        <div class="layer-row">
                            <span class="check">
                                <svg viewBox="0 0 12 12"><path d="M2 6l3 4 5-8" fill="none" stroke="#111" stroke-width="2"/></svg>
                            </span>
                            <span class="swatch"></span>
                            <strong>R24_52_Communes</strong>
                        </div>
                    </div>
                </div>
            </aside>

            <div class="map">
                <svg viewBox="288 160 1078 550" width="1078" height="550">
                    <g filter="url(#wobble)">
                        <path d="M597 154H1380V720H1240V169H597z" fill="url(#cells)" stroke="#35302c"/>
                        <path d="M1276 150h78l-4 18-25 2-18 5-20 3-6-8-5-3z" fill="#fff"/>
                        <path d="M430 345L376 345 372 362 345 372 358 388 345 392 338 400 313 392 308 403 280 408 280 467 308 483 335 472 335 497 337 503 320 513 333 522 360 533 373 553 360 573 343 588 335 600 333 627 337 640 355 662 375 690 395 720H430z" fill="url(#cells)" stroke="#35302c"/>
                        <path d="M302 553L320 557 320 565 312 570 323 577 333 581 335 598 323 581 310 575 302 566z" fill="url(#cells)" stroke="#35302c"/>
                    </g>
                    <path d="M358 502L362 502 362 518 366 522 381 526 386 531 386 544 380 544 367 535 359 537 347 531 333 522 345 512 350 506z" fill="#ffff00"/>
                </svg>
            </div>
        </div>

        <footer class="statusbar">
            <label class="locator">
                <svg><use href="#i-search"/></svg>
                <span>Taper pour trouver (Ctrl+K)</span>
            </label>
            <span class="crs">NF:LAMB93</span>
            <svg class="chat"><use href="#i-chat"/></svg>
        </footer>
    </div>

    <!-- Select by expression window -->
    <section class="dialog">
        <header class="dlg-title">
            <svg class="logo"><use href="#i-logo"/></svg>
            <span>Select by Expression - R24_52_Communes</span>
            <svg class="win-close" viewBox="0 0 12 12"><path d="M1 1l10 10M11 1L1 11" stroke="#fff"/></svg>
        </header>
        <div class="tabs">
            <span class="tab active">Expression</span>
            <span class="tab">Éditeur de fonction</span>
        </div>
        <div class="page">
            <div class="col-expr">
                <div class="ops">
                    <button>=</button><button>+</button><button>-</button><button>/</button><button>*</button>
                    <button>^</button><button class="bars">||</button><button>(</button><button>)</button><button>'\n'</button>
                </div>
                <div class="editor">
                    <div class="code-line"><span class="c-str">"POPULATION"</span><span class="c-op">&gt;</span><span class="c-num">10000</span><span class="caret"></span></div>
                </div>
                <div class="preview">Aperçu du résultat :&nbsp; 0</div>
            </div>
            <div class="vgrip first-grip"></div>
            <div class="col-funcs">
                <div class="search-row">
                    <label class="search">
                        <svg><use href="#i-search"/></svg>
                        <span>Rechercher...</span>
                    </label>
                    <button class="btn-help">Afficher l'aide</button>
                </div>
                <ul class="func-tree">
                    <li>Agrégats</li>
                    <li>Chaîne de caractères</li>
                    <li>Champs et Valeurs</li>
                    <li>Conditions</li>
                    <li>Conversions</li>
                    <li>Correspondance floue</li>
                    <li>Couches</li>
                    <li>Couches</li>
                    <li>Couleur</li>
                    <li>Date et Heure</li>
                    <li>Enregistrement et attributs</li>
                    <li>Fichiers et Chemins</li>
                    <li>Général</li>
                    <li>Géométrie</li>
                    <li>Math</li>
                    <li>Opérateurs</li>
                    <li>Rasters</li>
                    <li>Récent (selection)</li>
                    <li>Tableaux</li>
                    <li>Tableaux associatifs</li>
                    <li>Variables</li>
                </ul>
            </div>
            <div class="vgrip"></div>
            <div class="col-help">
                <div class="help">
                    <h3>groupe agrégats</h3>
                    <p>Contient des fonctions qui agrègent des valeurs sur des couches et des champs.</p>
                </div>
            </div>
        </div>
        <div class="dlg-foot">
            <button class="btn">Aide</button>
            <button class="btn zoom">Zoom sur les entités</button>
            <div class="split">
                <button class="btn main-action"><svg class="eps-icon" viewBox="0 0 24 24"><use href="#i-eps"/><text class="t-eps" x="0" y="15">ε</text></svg>Sélectionner des entités</button>
                <button class="btn caret-btn"></button>
            </div>
            <button class="btn close"><u>F</u>ermer</button>
        </div>
    </section>

    <!-- Dropdown of the select by expression tool -->
    <div class="popup">
        <div class="popup-item"><svg><use href="#i-selval"/></svg>Sélectionner des entités par valeur...</div>
        <div class="popup-item current"><svg class="eps-icon" viewBox="0 0 24 24"><use href="#i-eps"/><text class="t-eps" x="0" y="15">ε</text></svg>Sélectionner les entités à l'aide d'une expression...</div>
        <div class="popup-item"><svg><use href="#i-selall"/></svg>Sélectionner toutes les entités</div>
        <div class="popup-item"><svg><use href="#i-selinv"/></svg>Inverser la sélection des entités</div>
    </div>

    <!-- Red marks drawn over the screenshot -->
    <svg class="marks" viewBox="0 0 1366 738">
        <g fill="none" stroke="#f00" stroke-width="2.500">
            <rect x="861" y="48" width="11" height="29"/>
            <rect x="829" y="102.500" width="355" height="21"/>
            <rect x="417" y="275.500" width="293" height="399"/>
            <rect x="1012" y="711.500" width="147" height="21"/>
        </g>
        <g fill="none" stroke="#f00" stroke-width="3">
            <path d="M866 78V92"/>
            <path d="M839 124L708 263"/>
            <path d="M710 675L995 719"/>
        </g>
        <g fill="#f00">
            <path d="M860 90H873L866.500 102z"/>
            <path d="M696 276L702 254 716 267z"/>
            <path d="M1011 722L993 712 991 727z"/>
        </g>
    </svg>
</body>
</html>
```

FILE: styles.css
```css
/* General styles */
* {
    box-sizing: border-box;
}

html, body {
    margin: 0;
    padding: 0;
}

body {
    width: 1366px;
    height: 738px;
    overflow: hidden;
    position: relative;
    font-family: "Noto Sans", Arial, sans-serif;
    font-size: 11.5px;
    letter-spacing: -0.2px;
    color: #111;
    background-color: #f0f0f0;
}

ul {
    list-style: none;
    margin: 0;
    padding: 0;
}

button {
    font: inherit;
    color: inherit;
    letter-spacing: inherit;
}

.sprite {
    position: absolute;
    width: 0;
    height: 0;
}

.app {
    display: flex;
    flex-direction: column;
    height: 738px;
}

/* Text inside the icons */
svg text {
    letter-spacing: 0;
}

.eps-icon {
    overflow: visible;
}

.t-a {
    font: 11px "Liberation Sans", sans-serif;
    fill: #444;
}

.t-11 {
    font: 700 8px "Liberation Sans", sans-serif;
    fill: #777;
}

.t-i {
    font: italic 700 15px "Liberation Serif", serif;
    fill: #fff;
}

.t-i.small {
    font-size: 11px;
}

.t-eps {
    font: 28px "Liberation Serif", serif;
    fill: #5c3a78;
}

.t-eps.small {
    font-size: 18px;
    fill: #6d5a85;
}

.t-t {
    font: 15px "Liberation Serif", serif;
    fill: #333;
}

.t-lab {
    font: 700 9px "Liberation Sans", sans-serif;
    fill: #333;
}

.t-lab.red {
    fill: #e02020;
}

.t-lab.grey {
    fill: #bbb;
}

.t-ban {
    font: 700 9.500px "Liberation Sans", sans-serif;
    fill: #dde;
}

/* Title bar */
.titlebar {
    display: flex;
    align-items: center;
    flex: 0 0 23px;
    padding-left: 2px;
    background-color: #4d4b48;
    color: #f0f0f0;
    font-size: 13px;
    letter-spacing: 0;
}

.logo {
    flex: none;
    width: 16px;
    height: 16px;
    margin-right: 5px;
}

.winbtns {
    display: flex;
    align-items: center;
    margin-left: auto;
}

.win-min {
    width: 10px;
    height: 1px;
    margin-right: 35px;
    background-color: #fff;
}

.win-max {
    width: 10px;
    height: 10px;
    margin-right: 35px;
    border: 1px solid #fff;
    box-shadow: 2px -2px 0 -1px #4d4b48, 2px -2px 0 0 #fff;
}

.win-close {
    width: 11px;
    height: 11px;
    margin-right: 21px;
}

/* Menu */
.menubar {
    display: flex;
    align-items: center;
    gap: 13.700px;
    flex: 0 0 19px;
    padding-left: 10px;
    border-bottom: 1px solid #dcdcdc;
    background-color: #f4f4f4;
}

/* Toolbars */
.toolbar {
    display: flex;
    align-items: center;
    flex: 0 0 39px;
    border-bottom: 2px solid #d2d2d2;
    background: linear-gradient(#fbfbfb, #f0f0f0);
}

.tb {
    display: flex;
    align-items: center;
    justify-content: center;
    flex: 0 0 33px;
    height: 32px;
}

.tb svg {
    width: 24px;
    height: 24px;
}

.tb.lab svg {
    height: 14px;
}

.tb.off svg {
    opacity: 0.75;
    filter: grayscale(1);
}

.tb.pressed {
    margin: 0 2px;
    flex-basis: 29px;
    border: 1px solid #b5b5b5;
    border-radius: 3px;
    background-color: #dcdcdc;
}

.drop {
    position: relative;
    flex: 0 0 12px;
    height: 32px;
}

.drop::after {
    content: "";
    position: absolute;
    left: 1px;
    top: 14px;
    border: 4.500px solid transparent;
    border-top: 5px solid #666;
    border-bottom: 0;
}

.pressed-drop {
    border: 1px solid #b5b5b5;
    border-radius: 3px;
    background-color: #dcdcdc;
}

.pressed-drop::after {
    left: 0;
}

.drop.small {
    flex-basis: 10px;
    height: 16px;
}

.drop.small::after {
    top: 6px;
    left: 0;
}

.grip {
    display: flex;
    justify-content: center;
    flex: 0 0 16px;
    height: 24px;
}

.grip::before {
    content: "";
    width: 4px;
    border-left: 1px dotted #b0b0b0;
    border-right: 1px dotted #b0b0b0;
}

.grip.first {
    flex-basis: 12.500px;
}

.grip.n {
    flex-basis: 15px;
}

.sep {
    flex: 0 0 5px;
    height: 24px;
    border-left: 1px solid #d5d5d5;
    margin-left: 2px;
}

.sep.wide {
    flex-basis: 7px;
    margin-left: 0;
    background: linear-gradient(#d5d5d5, #d5d5d5) center / 1px 100% no-repeat;
    border-left: 0;
}

.right-group {
    display: flex;
    align-items: center;
    margin-left: auto;
}

.right-group .fill {
    flex: 0 0 84px;
}

.pad-right {
    padding-right: 28px;
}

.more {
    flex: 0 0 18px;
    text-align: center;
    font-weight: 700;
    font-size: 13px;
}

.gap-more {
    flex-basis: 10px;
    margin-left: 23px;
}

/* Docks */
.main {
    display: flex;
    flex: 1;
    min-height: 0;
}

.side {
    display: flex;
    flex-direction: column;
    flex: 0 0 281px;
    margin-right: 7px;
}

.dock-title {
    display: flex;
    align-items: center;
    height: 20px;
    padding-left: 4px;
    gap: 3px;
}

.dock-title span {
    margin-right: auto;
}

.dock-btn {
    width: 12px;
    height: 12px;
}

.dock-title .dock-btn:last-child {
    margin-right: 1px;
}

.dock-tools {
    display: flex;
    align-items: center;
    gap: 8px;
    height: 29px;
    padding-left: 8px;
}

.dock-tools svg {
    width: 17px;
    height: 17px;
    flex: none;
}

.dock-tools.tight {
    padding-left: 8px;
    gap: 7px;
}

.dock-tools svg.wide {
    width: 20px;
}

.tree {
    display: flex;
    height: 180px;
    border: 1px solid #b4b4b4;
    background-color: #fff;
    overflow: hidden;
}

.tree-rows {
    flex: 1;
    padding-top: 2px;
}

.tree-rows li {
    display: flex;
    align-items: center;
    height: 18px;
    white-space: nowrap;
}

.tree-rows li svg {
    flex: none;
    width: 16px;
    height: 16px;
    margin: 0 4px 0 7px;
}

.tree-rows li.sub {
    padding-left: 20px;
}

.arrow {
    flex: 0 0 18px;
    height: 9px;
    position: relative;
}

.arrow::after {
    content: "";
    position: absolute;
    left: 8px;
    top: 0;
    border-left: 5px solid #555;
    border-top: 4.500px solid transparent;
    border-bottom: 4.500px solid transparent;
}

.arrow.open::after {
    left: 7px;
    top: 2px;
    border-top: 5px solid #555;
    border-left: 4.500px solid transparent;
    border-right: 4.500px solid transparent;
    border-bottom: 0;
}

.arrow.none::after {
    display: none;
}

.scrollbar {
    display: grid;
    grid-template-rows: 13px 55px 97px 13px;
    flex: 0 0 13px;
    border-left: 1px solid #e4e4e4;
    background-color: #f0f0f0;
}

.sb-up, .sb-down {
    position: relative;
    background-color: #f4f4f4;
}

.sb-up::after, .sb-down::after {
    content: "";
    position: absolute;
    left: 2px;
    top: 4px;
    border: 4px solid transparent;
    border-top: 0;
    border-bottom: 4px solid #555;
}

.sb-down::after {
    border-bottom: 0;
    border-top: 4px solid #555;
}

.sb-track {
    background-color: #f6f6f6;
}

.sb-thumb {
    background-color: #e4e4e4;
}

.splitter {
    flex: 0 0 7px;
    background: radial-gradient(circle, #aaa 0.6px, transparent 0.8px) center / 3px 3px repeat-x;
    background-size: 3px 3px;
}

.layers {
    display: flex;
    flex-direction: column;
    flex: 1;
    min-height: 0;
}

.layers .dock-tools {
    height: 30px;
}

.layer-tree {
    flex: 1;
    border: 1px solid #b4b4b4;
    background-color: #fff;
}

.layer-row {
    display: flex;
    align-items: center;
    height: 18px;
    padding-left: 24px;
    padding-top: 1px;
    background-color: #f0f0f0;
}

.check {
    width: 13px;
    height: 13px;
    margin-right: 7px;
    border: 1px solid #777;
    background-color: #fff;
}

.check svg {
    display: block;
    width: 11px;
    height: 11px;
}

.swatch {
    width: 16px;
    height: 16px;
    margin-right: 6px;
    border: 1px solid #555;
    background-color: #7b7a8a;
}

.layer-row strong {
    text-decoration: underline;
}

/* Map */
.map {
    flex: 1;
    background-color: #fff;
    border-top: 1px solid #d0d0d0;
    border-left: 1px solid #b4b4b4;
    overflow: hidden;
}

.map svg {
    display: block;
    margin: -1px 0 0 -1px;
}

/* Status bar */
.statusbar {
    display: flex;
    align-items: center;
    flex: 0 0 28px;
    padding-left: 4px;
}

.locator {
    display: flex;
    align-items: center;
    width: 241px;
    height: 21px;
    padding-left: 8px;
    border: 1px solid #b4b4b4;
    border-radius: 3px;
    background-color: #fff;
    color: #777;
    letter-spacing: -0.35px;
}

.locator svg, .search svg {
    width: 14px;
    height: 14px;
    margin-right: 6px;
    flex: none;
}

.crs {
    margin-left: auto;
    margin-right: 14px;
}

.chat {
    width: 18px;
    height: 18px;
    margin-right: 10px;
}

/* Dialog */
.dialog {
    position: absolute;
    left: 404px;
    top: 170px;
    display: flex;
    flex-direction: column;
    width: 863px;
    height: 567px;
    background-color: #f0f0f0;
    box-shadow: 0 0 0 1px #666, 2px 2px 6px rgba(0, 0, 0, 0.35);
}

.dlg-title {
    display: flex;
    align-items: center;
    flex: 0 0 31px;
    padding-left: 8px;
    background-color: #4d4b48;
    color: #eee;
}

.dlg-title .win-close {
    margin-left: auto;
    margin-right: 9px;
}

.tabs {
    display: flex;
    align-items: flex-end;
    flex: 0 0 27px;
    margin-right: 5px;
    padding-left: 3px;
    border-bottom: 1px solid #c4c4c4;
    letter-spacing: -0.4px;
}

.tab {
    display: flex;
    align-items: center;
    justify-content: center;
    width: 114px;
    height: 23px;
    margin-left: 1px;
    border: 1px solid #c4c4c4;
    border-bottom: 0;
    border-radius: 2px 2px 0 0;
}

.tab.active {
    width: 76px;
    height: 25px;
    margin: 0 0 -1px;
    background-color: #fff;
}

.page {
    display: flex;
    height: 479px;
    padding-left: 12px;
}

.col-expr {
    display: flex;
    flex-direction: column;
    flex: 0 0 294px;
    padding-top: 19px;
}

.vgrip {
    flex: 0 0 13px;
    background: radial-gradient(circle, #aaa 0.6px, transparent 0.8px) center / 3px 3px repeat-y;
    background-size: 3px 3px;
    margin: 222px 0 220px;
}

.vgrip.first-grip {
    flex-basis: 23px;
}

.ops {
    display: flex;
    gap: 3px;
    height: 21px;
    margin-bottom: 7px;
}

.ops button {
    flex: 1;
    min-width: 0;
    padding: 0;
    border: 1px solid #b4b4b4;
    border-radius: 3px;
    background: linear-gradient(#fff, #f2f2f2);
    font-size: 12px;
    overflow: hidden;
}

.ops button.bars {
    color: #2f6fb0;
    font-weight: 700;
    letter-spacing: -1px;
}

.editor {
    height: 400px;
    background-color: #fff;
    font-family: "Liberation Sans", Arial, sans-serif;
    font-size: 12px;
    letter-spacing: 0.1px;
}

.code-line {
    display: flex;
    align-items: center;
    height: 17px;
    padding: 1px 0 0 2px;
    background-color: #fdf1ea;
}

.c-str {
    color: #e6ad2e;
}

.c-op {
    color: #5aa0d8;
}

.c-num {
    color: #c8143c;
}

.caret {
    width: 1px;
    height: 14px;
    background-color: #222;
}

.preview {
    margin-top: 6px;
}

.col-funcs {
    display: flex;
    flex-direction: column;
    flex: 0 0 268px;
    padding: 11px 0 13px;
}

.search-row {
    display: flex;
    gap: 6px;
    height: 20px;
    margin-bottom: 7px;
}

.search {
    display: flex;
    align-items: center;
    flex: 1;
    padding-left: 8px;
    border: 1px solid #b4b4b4;
    border-radius: 3px;
    background-color: #fff;
    color: #777;
}

.btn-help {
    width: 79px;
    padding: 0;
    border: 1px solid #c4c4c4;
    border-radius: 3px;
    background-color: #f2f2f2;
    color: #777;
    white-space: nowrap;
    letter-spacing: -0.3px;
}

.func-tree {
    flex: 1;
    border: 1px solid #b4b4b4;
    background-color: #fff;
}

.func-tree li {
    position: relative;
    height: 15px;
    line-height: 15px;
    margin-left: 20px;
    padding-left: 3px;
    background-color: #ededed;
}

.func-tree li::before {
    content: "";
    position: absolute;
    left: -12px;
    top: 3px;
    border-left: 5px solid #555;
    border-top: 4px solid transparent;
    border-bottom: 4px solid transparent;
}

.col-help {
    flex: 0 0 232px;
    padding: 19px 0 22px;
}

.help {
    height: 100%;
    padding: 4px;
    border: 1px solid #b4b4b4;
    background-color: #fff;
}

.help h3 {
    margin: 0 0 10px;
    height: 18px;
    line-height: 18px;
    background-color: #f4f4f4;
    color: #a3b81c;
    font-size: 12.500px;
    font-weight: 700;
    text-align: right;
}

.help p {
    margin: 0;
    line-height: 13.500px;
}

.dlg-foot {
    display: flex;
    align-items: center;
    flex: 1;
    padding: 0 3px 3px;
}

.btn {
    height: 21px;
    padding: 0;
    border: 1px solid #b4b4b4;
    border-radius: 3px;
    background: linear-gradient(#fff, #f2f2f2);
    white-space: nowrap;
}

.dlg-foot > .btn {
    width: 80px;
}

.dlg-foot > .btn.zoom {
    width: 108px;
    margin-left: auto;
    margin-right: 8px;
    font-size: 11px;
    letter-spacing: -0.45px;
}

.dlg-foot > .btn.close {
    margin-left: 12px;
}

.split {
    display: flex;
}

.main-action {
    display: flex;
    align-items: center;
    width: 148px;
    padding-left: 5px;
    border-radius: 3px 0 0 3px;
    letter-spacing: -0.45px;
}

.main-action svg {
    flex: none;
    width: 15px;
    height: 15px;
    margin-right: 3px;
}

.caret-btn {
    position: relative;
    width: 12px;
    border-radius: 0 3px 3px 0;
}

.caret-btn::after {
    content: "";
    position: absolute;
    left: 1px;
    top: 8px;
    border: 4px solid transparent;
    border-top: 5px solid #666;
    border-bottom: 0;
}

/* Popup menu */
.popup {
    position: absolute;
    left: 828px;
    top: 78px;
    width: 358px;
    height: 92px;
    border: 1px solid #a0a0a0;
    background-color: #fff;
    letter-spacing: -0.15px;
}

.popup-item {
    display: flex;
    align-items: center;
    height: 23px;
    padding: 0 0 2px 7px;
}

.popup-item svg {
    flex: none;
    width: 15px;
    height: 15px;
    margin-right: 5px;
}

.popup-item.current {
    background-color: #3399ff;
    color: #fff;
}

.marks {
    position: absolute;
    left: 0;
    top: 0;
    width: 1366px;
    height: 738px;
    pointer-events: none;
}
```
